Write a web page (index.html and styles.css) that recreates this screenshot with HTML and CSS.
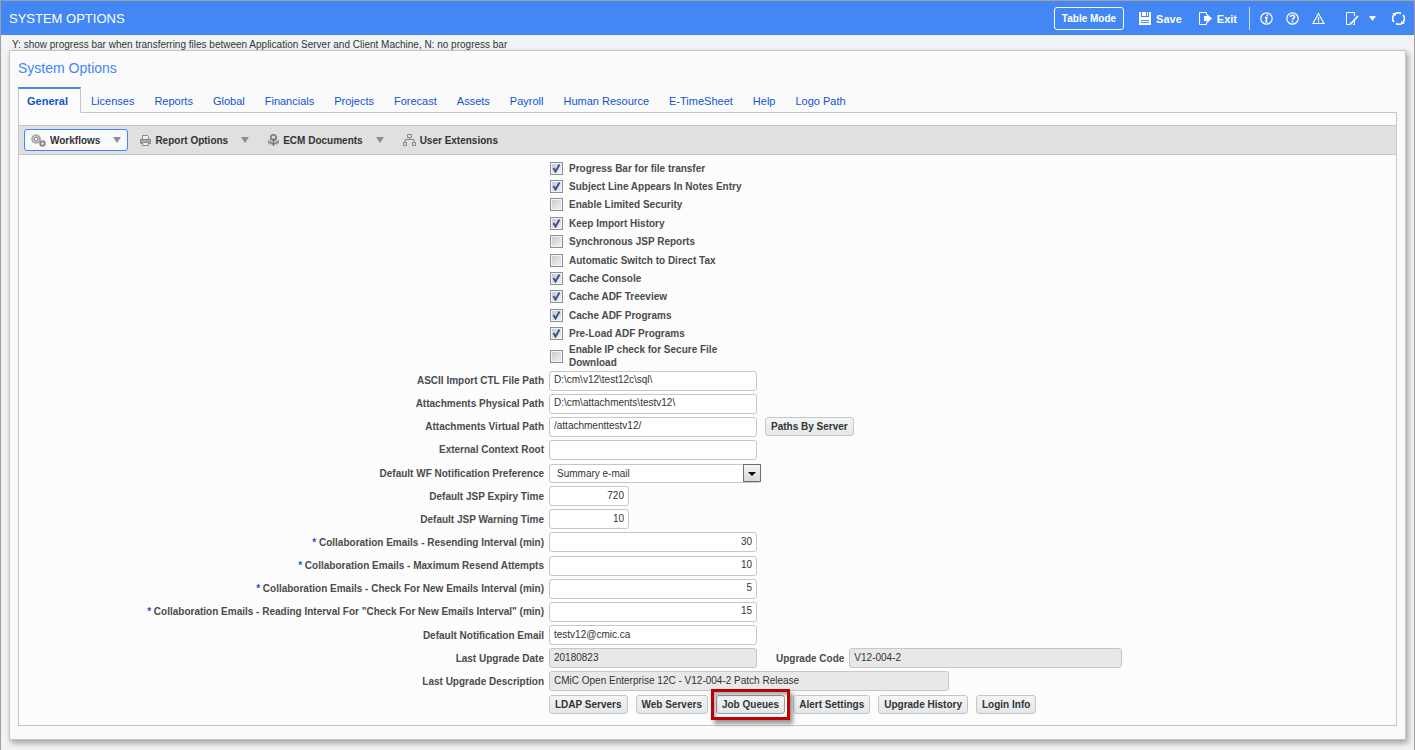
FILE: index.html
```html
<!DOCTYPE html>
<html lang="en">
<head>
    <meta charset="UTF-8">
    <meta name="viewport" content="width=device-width, initial-scale=1.0">
    <title>System Options</title>
    <link rel="stylesheet" href="styles.css">
</head>
<body>
    <header class="topbar">
        <h1>SYSTEM OPTIONS</h1>
        <div class="actions">
            <button type="button" class="mode">Table Mode</button>
            <button type="button" class="action">
                <svg width="12" height="13" viewBox="0 0 12 13"><path fill="#fff" d="M0 0h2v5h8V0h2v13H0z"/><path fill="#fff" d="M3 0h4v4H3zM8 0h1v4H8z"/><path stroke="#4387f4" d="M2 8.5h8M2 10.5h8"/></svg>
                Save
            </button>
            <button type="button" class="action exit">
                <svg width="13" height="13" viewBox="0 0 13 13"><path fill="none" stroke="#fff" d="M7.5 3V.5h-7v12h7V10"/><path fill="#fff" d="M5 4h3V2l5 4.5L8 11V9H5z"/></svg>
                Exit
            </button>
            <span class="divider"></span>
            <button type="button" class="icon" aria-label="Information">
                <svg width="13" height="13" viewBox="0 0 13 13"><circle cx="6.5" cy="6.5" r="5.7" fill="none" stroke="#fff" stroke-width="1.2"/><path d="M7.6 2.4L7.2 4M5 5.6h1.8L6 9.8h1.5" fill="none" stroke="#fff" stroke-width="1.6"/></svg>
            </button>
            <button type="button" class="icon" aria-label="Help">
                <svg width="13" height="13" viewBox="0 0 13 13"><circle cx="6.5" cy="6.5" r="5.7" fill="none" stroke="#fff" stroke-width="1.2"/><path d="M4.5 5c0-2.4 4-2.4 4 0 0 1.3-2 1.3-2 2.8M6.5 8.8v1.5" fill="none" stroke="#fff" stroke-width="1.6"/></svg>
            </button>
            <button type="button" class="icon" aria-label="Warnings">
                <svg width="13" height="13" viewBox="0 0 13 13"><path d="M6.5 1.5l5.5 10H1z" fill="none" stroke="#fff" stroke-width="1.1"/><path d="M6.5 5v3.5M6.5 9.3v1.2" stroke="#fff" stroke-width="1.3"/></svg>
            </button>
            <button type="button" class="icon notes" aria-label="Notes">
                <svg width="13" height="13" viewBox="0 0 13 13"><path d="M8.500 4V.5h-8v12h4M8.5 9v3.500H7" fill="none" stroke="#fff"/><path d="M12 4l-6 6.5-2 1.500" fill="none" stroke="#fff" stroke-width="1.8"/></svg>
                <svg width="7" height="5" viewBox="0 0 7 5"><path fill="#fff" d="M0 0h7L3.5 5z"/></svg>
            </button>
            <button type="button" class="icon" aria-label="Refresh">
                <svg width="13" height="13" viewBox="0 0 13 13"><path d="M2 10A5.6 5.6 0 0 1 9 1.5M11 3a5.6 5.6 0 0 1-7 8.500" fill="none" stroke="#fff" stroke-width="1.6"/><path fill="#fff" d="M0 1h4v3zM13 12H9V9z"/></svg>
            </button>
        </div>
    </header>

    <p class="hint">Y: show progress bar when transferring files between Application Server and Client Machine, N: no progress bar</p>

    <main class="panel">
        <h2>System Options</h2>
        <nav class="tabs">
            <a href="#" class="active">General</a>
            <a href="#">Licenses</a>
            <a href="#">Reports</a>
            <a href="#">Global</a>
            <a href="#">Financials</a>
            <a href="#">Projects</a>
            <a href="#">Forecast</a>
            <a href="#">Assets</a>
            <a href="#">Payroll</a>
            <a href="#">Human Resource</a>
            <a href="#">E-TimeSheet</a>
            <a href="#">Help</a>
            <a href="#">Logo Path</a>
        </nav>

        <div class="content">
            <div class="toolbar">
                <button type="button" class="tool selected">
                    <svg width="15" height="13" viewBox="0 0 15 13"><circle cx="5" cy="5" r="4" fill="#ddd" stroke="#999" stroke-width="1.6" stroke-dasharray="1.8 .5"/><circle cx="5" cy="5" r="2" fill="#fff" stroke="#777"/><circle cx="11.5" cy="9.5" r="2.200" fill="none" stroke="#888" stroke-width="2"/></svg>
                    Workflows
                    <svg class="arrow" width="8" height="6" viewBox="0 0 8 6"><path fill="#8b8f93" d="M0 0h8L4 6z"/></svg>
                </button>
                <button type="button" class="tool">
                    <svg width="11" height="11" viewBox="0 0 11 11"><path d="M2.5 5V.5h5l1 1V5" fill="#eee" stroke="#888"/><path d="M.5 4.5h10v4H.5z" fill="#aaa" stroke="#888"/><path d="M2.5 7.5h6v3h-6z" fill="#eee" stroke="#888"/></svg>
                    Report Options
                    <svg class="arrow" width="8" height="6" viewBox="0 0 8 6"><path fill="#8b8f93" d="M0 0h8L4 6z"/></svg>
                </button>
                <button type="button" class="tool">
                    <svg width="11" height="12" viewBox="0 0 11 12"><path d="M0 6l3 1v4L0 9zM11 6L8 7v4l3-2z" fill="#999"/><circle cx="5.5" cy="3.5" r="2.700" fill="#ddd" stroke="#777" stroke-width="1.6"/><path d="M5.5 4v8M3 8.5l2.5 2 2.5-2" fill="none" stroke="#777" stroke-width="1.5"/></svg>
                    ECM Documents
                    <svg class="arrow" width="8" height="6" viewBox="0 0 8 6"><path fill="#8b8f93" d="M0 0h8L4 6z"/></svg>
                </button>
                <button type="button" class="tool">
                    <svg width="13" height="12" viewBox="0 0 13 12"><path d="M4.5.5h4v3h-4zM.5 8.5h3v3h-3zM9.5 8.5h3v3h-3zM6.5 3.5v2M2 8V5.5h9V8" fill="none" stroke="#888"/></svg>
                    User Extensions
                </button>
            </div>

            <form class="form">
                <div class="checks">
                    <label><input type="checkbox" checked><span>Progress Bar for file transfer</span></label>
                    <label><input type="checkbox" checked><span>Subject Line Appears In Notes Entry</span></label>
                    <label><input type="checkbox"><span>Enable Limited Security</span></label>
                    <label><input type="checkbox" checked><span>Keep Import History</span></label>
                    <label><input type="checkbox"><span>Synchronous JSP Reports</span></label>
                    <label><input type="checkbox"><span>Automatic Switch to Direct Tax</span></label>
                    <label><input type="checkbox" checked><span>Cache Console</span></label>
                    <label><input type="checkbox" checked><span>Cache ADF Treeview</span></label>
                    <label><input type="checkbox" checked><span>Cache ADF Programs</span></label>
                    <label><input type="checkbox" checked><span>Pre-Load ADF Programs</span></label>
                </div>
                <label class="ip-check"><input type="checkbox"><span>Enable IP check for Secure File Download</span></label>

                <div class="fields">
                    <div class="row">
                        <label for="ctl-path">ASCII Import CTL File Path</label>
                        <input type="text" id="ctl-path" value="D:\cm\v12\test12c\sql\">
                    </div>
                    <div class="row">
                        <label for="physical-path">Attachments Physical Path</label>
                        <input type="text" id="physical-path" value="D:\cm\attachments\testv12\">
                    </div>
                    <div class="row">
                        <label for="virtual-path">Attachments Virtual Path</label>
                        <div class="group">
                            <input type="text" id="virtual-path" value="/attachmenttestv12/">
                            <button type="button" class="btn">Paths By Server</button>
                        </div>
                    </div>
                    <div class="row">
                        <label for="context-root">External Context Root</label>
                        <input type="text" id="context-root">
                    </div>
                    <div class="row">
                        <label for="wf-pref">Default WF Notification Preference</label>
                        <div class="select">
                            <select id="wf-pref">
                                <option>Summary e-mail</option>
                            </select>
                        </div>
                    </div>
                    <div class="row">
                        <label for="jsp-expiry">Default JSP Expiry Time</label>
                        <input type="text" id="jsp-expiry" class="number short" value="720">
                    </div>
                    <div class="row">
                        <label for="jsp-warning">Default JSP Warning Time</label>
                        <input type="text" id="jsp-warning" class="number short" value="10">
                    </div>
                    <div class="row">
                        <label for="resend-interval"><span class="req">*</span> Collaboration Emails - Resending Interval (min)</label>
                        <input type="text" id="resend-interval" class="number" value="30">
                    </div>
                    <div class="row">
                        <label for="resend-max"><span class="req">*</span> Collaboration Emails - Maximum Resend Attempts</label>
                        <input type="text" id="resend-max" class="number" value="10">
                    </div>
                    <div class="row">
                        <label for="check-interval"><span class="req">*</span> Collaboration Emails - Check For New Emails Interval (min)</label>
                        <input type="text" id="check-interval" class="number" value="5">
                    </div>
                    <div class="row">
                        <label for="read-interval"><span class="req">*</span> Collaboration Emails - Reading Interval For "Check For New Emails Interval" (min)</label>
                        <input type="text" id="read-interval" class="number" value="15">
                    </div>
                    <div class="row">
                        <label for="email">Default Notification Email</label>
                        <input type="text" id="email" value="testv12@cmic.ca">
                    </div>
                    <div class="row">
                        <label for="upgrade-date">Last Upgrade Date</label>
                        <div class="group code-group">
                            <input type="text" id="upgrade-date" value="20180823" readonly>
                            <label for="upgrade-code">Upgrade Code</label>
                            <input type="text" id="upgrade-code" class="code" value="V12-004-2" readonly>
                        </div>
                    </div>
                    <div class="row">
                        <label for="upgrade-desc">Last Upgrade Description</label>
                        <input type="text" id="upgrade-desc" class="long" value="CMiC Open Enterprise 12C - V12-004-2 Patch Release" readonly>
                    </div>
                    <div class="row">
                        <div class="group buttons">
                            <button type="button" class="btn">LDAP Servers</button>
                            <button type="button" class="btn">Web Servers</button>
                            <button type="button" class="btn marked">Job Queues</button>
                            <button type="button" class="btn">Alert Settings</button>
                            <button type="button" class="btn">Upgrade History</button>
                            <button type="button" class="btn">Login Info</button>
                        </div>
                    </div>
                </div>
            </form>
        </div>
    </main>
</body>
</html>
```
FILE: styles.css
```css
*,
*::before,
*::after {
    box-sizing: border-box;
}

body {
    margin: 0;
    min-height: 100vh;
    display: flex;
    flex-direction: column;
    border: 1px solid #a0a0a0;
    background-color: #f1f3f5;
    font-family: "Liberation Sans", Arial, sans-serif;
    font-size: 10px;
    color: #333;
}

button, input, select {
    font-family: inherit;
    font-size: inherit;
    color: inherit;
}

button {
    margin: 0;
    white-space: nowrap;
    cursor: pointer;
}

svg {
    display: block;
    flex: none;
}

/* header */
.topbar {
    display: flex;
    align-items: center;
    justify-content: space-between;
    height: 34px;
    padding: 1px 9px 0 8px;
    background-color: #4387f4;
    color: #fff;
}

.topbar h1 {
    margin: 0;
    font-size: 13px;
    font-weight: normal;
}

.actions {
    display: flex;
    align-items: center;
}

.actions button {
    display: flex;
    align-items: center;
    padding: 0;
    border: none;
    background: none;
    font-size: 11px;
    font-weight: bold;
}

.actions .mode {
    height: 23px;
    margin-right: 15px;
    padding: 0 7px;
    border: 1px solid #fff;
    border-radius: 3px;
    font-size: 10px;
}

.actions .action {
    gap: 5px;
    margin-right: 17px;
}

.actions .exit {
    margin-right: 12px;
}

.divider {
    width: 1px;
    height: 23px;
    margin-right: 10px;
    background-color: #c9dcfb;
}

.actions .icon {
    margin-right: 13px;
}

.actions .icon:last-child {
    margin-right: 0;
}

.actions .notes {
    gap: 10px;
    margin-left: 8px;
    margin-right: 16px;
}

.hint {
    margin: 2px 0 -2px;
    padding-left: 11px;
    line-height: 15px;
}

/* panel */
.panel {
    flex: 1;
    display: flex;
    flex-direction: column;
    margin: 0 8px 10px;
    padding: 0 8px 13px;
    border: 1px solid #c4c6c8;
    background-color: #fafafa;
    box-shadow: 2px 3px 6px rgba(0, 0, 0, 0.35);
}

.panel h2 {
    margin: 0;
    padding: 9px 0 10px;
    line-height: 17px;
    font-size: 14px;
    font-weight: normal;
    color: #4387f4;
}

.tabs {
    display: flex;
    font-size: 11px;
}

.tabs a {
    padding: 3px 10px 0;
    height: 26px;
    line-height: 22px;
    border-bottom: 1px solid #c4c6c8;
    color: #1155cc;
    text-decoration: none;
    white-space: nowrap;
}

.tabs::after {
    content: "";
    flex: 1;
    border-bottom: 1px solid #c4c6c8;
}

.tabs .active {
    padding: 1px 12px 0 8px;
    border: 1px solid #c4c6c8;
    border-top: 2px solid #4387f4;
    border-bottom-color: #fcfcfc;
    background-color: #fcfcfc;
    font-weight: bold;
}

.content {
    flex: 1;
    padding-top: 12px;
    border: 1px solid #c4c6c8;
    border-top: none;
    background-color: #fcfcfc;
}

.toolbar {
    display: flex;
    align-items: center;
    gap: 5px;
    height: 30px;
    padding: 0 5px;
    border-top: 1px solid #c4c6c8;
    border-bottom: 1px solid #c4c6c8;
    background-color: #e0e0e0;
}

.tool {
    display: flex;
    align-items: center;
    gap: 4px;
    height: 22px;
    padding: 0 6px;
    border: 1px solid transparent;
    border-radius: 3px;
    background: none;
    font-weight: bold;
}

.tool.selected {
    border-color: #4387f4;
    background-color: #f7f9fc;
}

.arrow {
    margin-left: 9px;
}

/* form */
.form {
    padding: 4px 0 9px;
    font-weight: bold;
    color: #4b4b4b;
}

.checks {
    display: grid;
    grid-auto-rows: 1fr;
    min-height: 184px;
}

.checks,
.ip-check {
    margin-left: 531px;
}

.checks label,
.ip-check {
    display: flex;
    align-items: center;
    gap: 6px;
}

.ip-check {
    width: 190px;
    line-height: 13px;
}

input[type="checkbox"] {
    appearance: none;
    flex: none;
    width: 13px;
    height: 13px;
    margin: 0;
    border: 1px solid #8e8f8f;
    box-shadow: inset 0 0 0 1px #f4f4f4;
    background: linear-gradient(135deg, #c3c7cb, #f4f4f4);
}

input[type="checkbox"]:checked {
    background: url("data:image/svg+xml,%3Csvg xmlns='http://www.w3.org/2000/svg' viewBox='0 0 11 11'%3E%3Cpath d='M2.5 5l2 3.5L8.5 1.5' fill='none' stroke='%233c4f92' stroke-width='1.9'/%3E%3C/svg%3E"), linear-gradient(135deg, #c3c7cb, #f4f4f4);
}

.fields {
    display: grid;
    grid-auto-rows: 1fr;
    min-height: 347px;
}

.row {
    display: grid;
    grid-template-columns: 525px 1fr;
    column-gap: 5px;
    align-items: center;
    justify-items: start;
}

.row > label {
    justify-self: end;
}

.req {
    color: #1155cc;
}

input[type="text"] {
    width: 208px;
    height: 20px;
    padding: 0 4px 2px;
    border: 1px solid #c4c6c8;
    border-radius: 3px;
    background-color: #fff;
    color: #333;
}

input[readonly] {
    background-color: #e8e8e8;
}

input.number {
    text-align: right;
}

input.short {
    width: 80px;
}

input.code {
    width: 273px;
}

input.long {
    width: 400px;
}

.group {
    display: flex;
    align-items: center;
    gap: 8px;
}

.code-group {
    gap: 5px;
}

.code-group label {
    margin-left: 14px;
}

.select {
    position: relative;
    width: 212px;
}

.select select {
    appearance: none;
    display: block;
    width: 100%;
    height: 19px;
    padding: 0 20px 0 7px;
    border: 1px solid #c4c6c8;
    border-radius: 3px;
    background-color: #fff;
    color: #333;
}

/* drop-down button drawn over the select */
.select::before {
    content: "";
    position: absolute;
    top: 0;
    right: 0;
    width: 18px;
    height: 18px;
    border: 1px solid #707070;
    background: linear-gradient(#f4f4f4, #d8d8d8);
    pointer-events: none;
}

.select::after {
    content: "";
    position: absolute;
    top: 8px;
    right: 5px;
    border: 4px solid transparent;
    border-top-color: #000;
    border-bottom: none;
    pointer-events: none;
}

.buttons {
    grid-column: 2;
}

.btn {
    height: 19px;
    padding: 0 5px;
    border: 1px solid #c4c6c8;
    border-radius: 3px;
    background: linear-gradient(#f3f5f6, #e3e7ea);
    font-weight: bold;
    color: #333;
}

.marked {
    position: relative;
    z-index: 1;
    border-color: #9a9c9e;
}

/* red frame round the highlighted button */
.marked::after {
    content: "";
    position: absolute;
    inset: -7px -6px;
    border: 3px solid #c00000;
    box-shadow: 3px 4px 4px rgba(0, 0, 0, 0.4), inset 2px 3px 3px rgba(0, 0, 0, 0.3);
    pointer-events: none;
}
```
